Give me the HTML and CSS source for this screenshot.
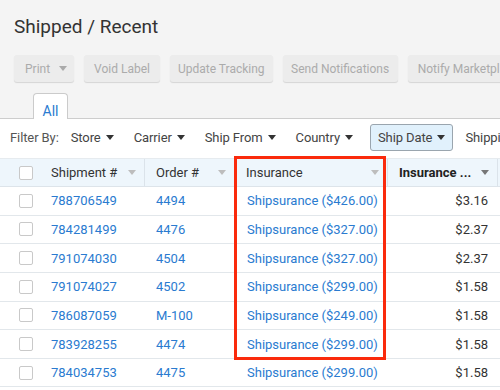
FILE: index.html
```html
<!DOCTYPE html>
<html>
<head>
<meta charset="utf-8">
<link rel="stylesheet" href="styles.css">
</head>
<body>
<div class="top">
  <h1 class="title">Shipped / Recent</h1>
  <div class="actions">
    <button class="btn btn-menu">Print<span class="caret caret-grey"></span></button>
    <button class="btn">Void Label</button>
    <button class="btn btn-tight">Update Tracking</button>
    <button class="btn btn-mid">Send Notifications</button>
    <button class="btn">Notify Marketplace</button>
  </div>
  <div class="tabs"><div class="tab">All</div></div>
</div>

<div class="filters">
  <span class="filter-label">Filter By:</span>
  <span class="filter">Store<span class="caret"></span></span>
  <span class="filter">Carrier<span class="caret"></span></span>
  <span class="filter">Ship From<span class="caret"></span></span>
  <span class="filter">Country<span class="caret"></span></span>
  <span class="filter filter-active">Ship Date<span class="caret"></span></span>
  <span class="filter">Shipping Service<span class="caret"></span></span>
</div>

<div class="table">
  <div class="row head">
    <div class="cell cb-cell"><span class="checkbox"></span></div>
    <div class="cell hcell"><span>Shipment #</span><span class="sort"></span></div>
    <div class="cell hcell"><span>Order #</span><span class="sort"></span></div>
    <div class="cell hcell"><span>Insurance</span><span class="sort"></span></div>
    <div class="cell hcell bold"><span>Insurance ...</span><span class="sort sort-dark"></span></div>
    <div class="cell"></div>
  </div>
  <div class="row">
    <div class="cell cb-cell"><span class="checkbox"></span></div>
    <div class="cell link">788706549</div>
    <div class="cell link">4494</div>
    <div class="cell link ins">Shipsurance ($426.00)</div>
    <div class="cell amt">$3.16</div>
    <div class="cell"></div>
  </div>
  <div class="row">
    <div class="cell cb-cell"><span class="checkbox"></span></div>
    <div class="cell link">784281499</div>
    <div class="cell link">4476</div>
    <div class="cell link ins">Shipsurance ($327.00)</div>
    <div class="cell amt">$2.37</div>
    <div class="cell"></div>
  </div>
  <div class="row">
    <div class="cell cb-cell"><span class="checkbox"></span></div>
    <div class="cell link">791074030</div>
    <div class="cell link">4504</div>
    <div class="cell link ins">Shipsurance ($327.00)</div>
    <div class="cell amt">$2.37</div>
    <div class="cell"></div>
  </div>
  <div class="row">
    <div class="cell cb-cell"><span class="checkbox"></span></div>
    <div class="cell link">791074027</div>
    <div class="cell link">4502</div>
    <div class="cell link ins">Shipsurance ($299.00)</div>
    <div class="cell amt">$1.58</div>
    <div class="cell"></div>
  </div>
  <div class="row">
    <div class="cell cb-cell"><span class="checkbox"></span></div>
    <div class="cell link">786087059</div>
    <div class="cell link">M-100</div>
    <div class="cell link ins">Shipsurance ($249.00)</div>
    <div class="cell amt">$1.58</div>
    <div class="cell"></div>
  </div>
  <div class="row">
    <div class="cell cb-cell"><span class="checkbox"></span></div>
    <div class="cell link">783928255</div>
    <div class="cell link">4474</div>
    <div class="cell link ins">Shipsurance ($299.00)</div>
    <div class="cell amt">$1.58</div>
    <div class="cell"></div>
  </div>
  <div class="row">
    <div class="cell cb-cell"><span class="checkbox"></span></div>
    <div class="cell link">784034753</div>
    <div class="cell link">4475</div>
    <div class="cell link ins">Shipsurance ($299.00)</div>
    <div class="cell amt">$1.58</div>
    <div class="cell"></div>
  </div>
  <div class="highlight"></div>
</div>
</body>
</html>
```

FILE: styles.css
```css
html, body {
  margin: 0;
  padding: 0;
  background: #fff;
}
body {
  width: 500px;
  height: 390px;
  overflow: hidden;
  font-family: Roboto, "Liberation Sans", sans-serif;
  font-size: 13px;
  color: #333;
}
.top {
  background: #f4f4f4;
  border-bottom: 1px solid #cdcdcd;
  padding: 15px 0 0 14px;
}
.title {
  margin: 0;
  font-size: 19px;
  font-weight: 400;
  line-height: 24px;
  color: #333;
}
.actions {
  display: flex;
  gap: 10px;
  margin-top: 16px;
  white-space: nowrap;
}
.btn {
  flex: none;
  height: 27px;
  padding: 0 10px;
  border: 0;
  border-radius: 3px;
  background: #ececec;
  box-shadow: 0 1px 1px rgba(0, 0, 0, 0.13);
  color: #ababab;
  font-family: Roboto, "Liberation Sans", sans-serif;
  font-size: 12px;
  display: flex;
  align-items: center;
}
.btn-menu {
  padding: 0 7px 0 11px;
}
.btn-tight {
  padding: 0 8px;
}
.btn-mid {
  padding: 0 8.5px;
}
.caret {
  display: inline-block;
  width: 0;
  height: 0;
  border-left: 4px solid transparent;
  border-right: 4px solid transparent;
  border-top: 5px solid #333;
  margin-left: 5px;
}
.caret-grey {
  border-top-color: #aaa;
  margin-left: 9px;
}
.tabs {
  display: flex;
  margin-top: 11px;
  margin-bottom: -1px;
  padding-left: 19px;
}
.tab {
  position: relative;
  box-sizing: border-box;
  width: 35px;
  height: 26px;
  border: 1px solid #cbcbcb;
  border-bottom: none;
  border-radius: 4px 4px 0 0;
  background: #fff;
  color: #2a7bd0;
  font-size: 14px;
  line-height: 16px;
  text-align: center;
  padding-top: 9px;
}
.filters {
  display: flex;
  align-items: center;
  gap: 4px;
  height: 27px;
  margin-top: 5px;
  padding-left: 10px;
  white-space: nowrap;
  color: #444;
  letter-spacing: -0.1px;
}
.filter-label {
  color: #555;
}
.filter {
  flex: none;
  box-sizing: border-box;
  height: 27px;
  display: flex;
  align-items: center;
  padding: 0 7px;
  border: 1px solid transparent;
  border-radius: 3px;
}
.filter-active {
  background: #e1f1fc;
  border-color: #9aa5ae;
  margin-left: 5px;
}
.table {
  position: relative;
  margin-top: 7px;
}
.row {
  display: grid;
  grid-template-columns: 40px 105px 90px 153px 110px 1fr;
  height: 28.65px;
  box-sizing: border-box;
  border-bottom: 1px solid #e2e7eb;
}
.row.head {
  height: 29px;
  background: #eef6fc;
  border-top: 1px solid #e6ebef;
  border-bottom: 1px solid #dde4ea;
}
.cell {
  display: flex;
  align-items: center;
  padding-left: 11px;
  white-space: nowrap;
  overflow: hidden;
}
.cb-cell {
  padding-left: 19px;
}
.checkbox {
  display: block;
  box-sizing: border-box;
  width: 14px;
  height: 14px;
  border: 1px solid #c9c9c9;
  border-radius: 2px;
  background: #fff;
}
.hcell {
  justify-content: space-between;
  padding-right: 8px;
  border-right: 1px solid #dbe3ea;
  color: #333;
}
.bold {
  font-weight: 700;
  color: #222;
}
.sort {
  width: 0;
  height: 0;
  border-left: 4px solid transparent;
  border-right: 4px solid transparent;
  border-top: 5px solid #bdbdbd;
}
.sort-dark {
  border-top-color: #777;
}
.link {
  color: #2a7bd0;
}
.ins {
  padding-left: 12px;
}
.amt {
  justify-content: flex-end;
  padding-right: 10px;
  color: #333;
}
.highlight {
  position: absolute;
  left: 234px;
  top: -2px;
  width: 152px;
  height: 204px;
  box-sizing: border-box;
  border: 3px solid #fa2a0c;
  pointer-events: none;
}
```
